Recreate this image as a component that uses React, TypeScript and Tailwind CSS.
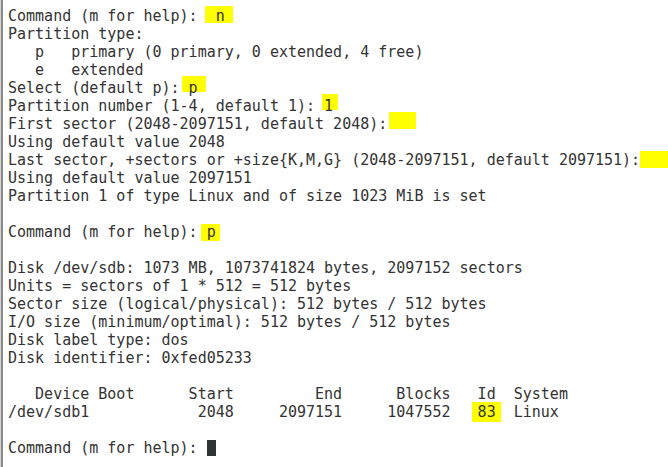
import React from "react";

type HL = { left: number; top: number; w: number; h: number };

const lines: { text: string; hl?: HL }[] = [
  { text: "Command (m for help):  n", hl: { left: 197, top: -1, w: 28, h: 17 } },
  { text: "Partition type:" },
  { text: "   p   primary (0 primary, 0 extended, 4 free)" },
  { text: "   e   extended" },
  { text: "Select (default p): p", hl: { left: 174, top: -3, w: 24, h: 16 } },
  { text: "Partition number (1-4, default 1): 1", hl: { left: 314, top: -3, w: 16, h: 16 } },
  { text: "First sector (2048-2097151, default 2048): ", hl: { left: 381, top: -3, w: 27, h: 17 } },
  { text: "Using default value 2048" },
  { text: "Last sector, +sectors or +size{K,M,G} (2048-2097151, default 2097151): ", hl: { left: 632, top: 0, w: 28, h: 17 } },
  { text: "Using default value 2097151" },
  { text: "Partition 1 of type Linux and of size 1023 MiB is set" },
  { text: "" },
  { text: "Command (m for help): p", hl: { left: 193, top: 1, w: 19, h: 17 } },
  { text: "" },
  { text: "Disk /dev/sdb: 1073 MB, 1073741824 bytes, 2097152 sectors" },
  { text: "Units = sectors of 1 * 512 = 512 bytes" },
  { text: "Sector size (logical/physical): 512 bytes / 512 bytes" },
  { text: "I/O size (minimum/optimal): 512 bytes / 512 bytes" },
  { text: "Disk label type: dos" },
  { text: "Disk identifier: 0xfed05233" },
  { text: "" },
  { text: "   Device Boot      Start         End      Blocks   Id  System" },
  { text: "/dev/sdb1            2048     2097151     1047552   83  Linux", hl: { left: 464, top: -1, w: 29, h: 20 } },
  { text: "" },
];

export default function App() {
  return (
    <div className="w-[668px] h-[467px] bg-white flex overflow-hidden">
      <div className="w-[1px] h-full bg-[#d4d4d4]" />
      <div className="w-[2px] h-full bg-[#8a8a8a]" />
      <div
        className="flex-1 pl-[5px] pt-[7px] text-[15px] leading-[18px] text-[#333333]"
        style={{ fontFamily: '"DejaVu Sans Mono", "Liberation Mono", monospace' }}
      >
        {lines.map((l, i) => (
          <div key={i} className="relative h-[18px] whitespace-pre">
            {l.hl && (
              <span
                className="absolute bg-[#ffff00]"
                style={{ left: l.hl.left, top: l.hl.top, width: l.hl.w, height: l.hl.h }}
              />
            )}
            <span className="relative">{l.text}</span>
          </div>
        ))}
        <div className="h-[18px] whitespace-pre flex items-center">
          <span>Command (m for help): </span>
          <span className="inline-block w-[9px] h-[16px] bg-[#2e3436]" />
        </div>
      </div>
    </div>
  );
}
